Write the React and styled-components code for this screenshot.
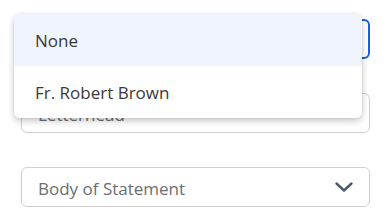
import React from "react";
import styled, { createGlobalStyle } from "styled-components";

const Global = createGlobalStyle`
    body {
        margin: 0;
        background: #ffffff;
        font-family: "Open Sans", "Liberation Sans", sans-serif;
    }
`
const Page = styled.div`
    display: flex;
    flex-direction: column;
    row-gap: 34px;
    padding: 19px 21px 0 21px;
    width: 349px;
`
const Field = styled.div`
    position: relative;
`
const SelectBox = styled.div`
    box-sizing: border-box;
    height: 40px;
    display: flex;
    align-items: center;
    justify-content: space-between;
    padding: 2px 16px 0 16px;
    border: ${p => p.$focused ? "2px solid #1c5fd1" : "1px solid #cfcfcf"};
    border-radius: 6px;
    background: #fff;
    color: #6b6e72;
    font-size: 17px;
`
const Chevron = styled.svg`
    width: 18px;
    height: 10px;
    margin-top: -2px;
`
const Menu = styled.div`
    position: absolute;
    left: -7px;
    top: -5px;
    width: 348px;
    background: #fff;
    border-radius: 6px;
    overflow: hidden;
    box-shadow: 0 3px 7px rgba(0, 0, 0, 0.22), 0 0 3px rgba(0, 0, 0, 0.08);
    z-index: 2;
`
const MenuItem = styled.div`
    height: 52px;
    display: flex;
    align-items: center;
    padding-left: 21px;
    padding-top: 1px;
    box-sizing: border-box;
    font-size: 17px;
    color: #3a3a3a;
    background: ${p => p.$active ? "#eff4fd" : "#fff"};
`

function Arrow(){
    return(
        <Chevron viewBox="0 0 18 10">
            <path d="M1.5 1.5 L9 8.5 L16.5 1.5" fill="none" stroke="#4d5a6a" strokeWidth="2.4" strokeLinecap="round" strokeLinejoin="round"/>
        </Chevron>
    )
}

export default function App(){
    return(
        <>
            <Global/>
            <Page>
                <Field>
                    <SelectBox $focused>
                        <span></span>
                    </SelectBox>
                    <Menu>
                        <MenuItem $active>None</MenuItem>
                        <MenuItem>Fr. Robert Brown</MenuItem>
                    </Menu>
                </Field>
                <Field>
                    <SelectBox>
                        <span>Letterhead</span>
                        <Arrow/>
                    </SelectBox>
                </Field>
                <Field>
                    <SelectBox>
                        <span>Body of Statement</span>
                        <Arrow/>
                    </SelectBox>
                </Field>
            </Page>
        </>
    )
}
